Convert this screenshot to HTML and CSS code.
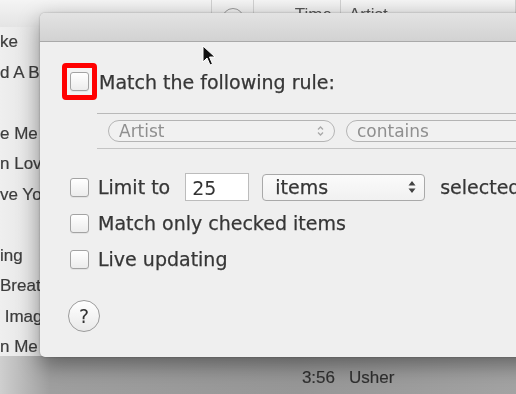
FILE: index.html
```html
<!DOCTYPE html>
<html lang="en">
<head>
    <meta charset="UTF-8">
    <meta name="viewport" content="width=device-width, initial-scale=1.0">
    <title>Smart Playlist</title>
    <link rel="stylesheet" href="styles.css">
</head>
<body>

<div class="screen">
    <!-- song list behind the sheet -->
    <div class="songs">
        <div class="song-head">
            <span class="col-name"></span>
            <span class="col-love"><span class="love-ring"></span></span>
            <span class="col-time">Time</span>
            <span class="col-artist">Artist</span>
        </div>
        <div class="song"><span class="col-name">ke</span></div>
        <div class="song"><span class="col-name">d A B</span></div>
        <div class="song"><span class="col-name"></span></div>
        <div class="song"><span class="col-name">e Me</span></div>
        <div class="song"><span class="col-name">n Lov</span></div>
        <div class="song"><span class="col-name">ve Yo</span></div>
        <div class="song"><span class="col-name"></span></div>
        <div class="song"><span class="col-name">ing</span></div>
        <div class="song"><span class="col-name">Breat</span></div>
        <div class="song"><span class="col-name">&nbsp;Imag</span></div>
        <div class="song"><span class="col-name">n Me</span></div>
    </div>
    <div class="song song-last">
        <span class="col-name"></span>
        <span class="col-love"></span>
        <span class="col-time">3:56</span>
        <span class="col-artist">Usher</span>
    </div>

    <!-- smart playlist sheet -->
    <div class="sheet">
        <div class="sheet-title"></div>
        <div class="sheet-body">
            <div class="rule-line">
                <span class="highlight"><span class="check"></span></span>
                <span class="label">Match the following rule:</span>
            </div>

            <div class="criteria">
                <span class="pill pill-field">
                    Artist
                    <svg class="updown" width="7" height="12" viewBox="0 0 7 12">
                        <path d="M1 4.5 L3.5 2 L6 4.5 M1 7.5 L3.5 10 L6 7.5" fill="none" stroke="#a8a8a8" stroke-width="1.3"/>
                    </svg>
                </span>
                <span class="pill pill-op">contains</span>
            </div>

            <div class="option">
                <span class="check"></span>
                <span class="label">Limit to</span>
                <span class="field">25</span>
                <span class="select">
                    items
                    <svg class="updown" width="8" height="14" viewBox="0 0 8 14">
                        <path d="M4 1 L7.5 5.5 L0.5 5.5 Z M4 13 L7.5 8.5 L0.5 8.5 Z" fill="#444"/>
                    </svg>
                </span>
                <span class="label">selected by</span>
            </div>
            <div class="option">
                <span class="check"></span>
                <span class="label">Match only checked items</span>
            </div>
            <div class="option">
                <span class="check"></span>
                <span class="label">Live updating</span>
            </div>

            <button class="help">?</button>
        </div>
    </div>

    <svg class="cursor" width="14" height="22" viewBox="0 0 14 22">
        <path d="M1 1 L1 17 L5 13 L8 20 L10.5 19 L7.5 12 L13 12 Z" fill="#111" stroke="#fff" stroke-width="1"/>
    </svg>
</div>

</body>
</html>
```

FILE: styles.css
```css
body {
    margin: 0;
    padding: 0;
    font-family: 'Liberation Sans', Arial, sans-serif;
    color: #3a3a3a;
    background: #e9e9e9;
}

.screen {
    position: relative;
    display: flex;
    flex-direction: column;
    width: 516px;
    height: 394px;
    overflow: hidden;
    background:
        linear-gradient(to right, #cfcfcf 0px, #9f9f9f 50px, #979797 300px, #a3a3a3 516px) 0 356px / 100% 38px no-repeat,
        linear-gradient(to right, #efefef 0px, #e4e4e4 40px);
    filter: blur(0.4px);
}

/* background list */
.songs {
    display: flex;
    flex-direction: column;
    flex-shrink: 0;
}

.song-head,
.song {
    display: grid;
    grid-template-columns: 212px 42px 87px 1fr;
    align-items: center;
    font-size: 17px;
}

.song-head {
    height: 27px;
    background: linear-gradient(#f4f4f4, #e4e4e4);
    color: #555;
}

.song-head > span {
    height: 100%;
    display: flex;
    align-items: center;
    border-right: 1px solid #d0d0d0;
    box-sizing: border-box;
}

.song {
    height: 30.5px;
    flex-shrink: 0;
    color: #3d3d3d;
    -webkit-text-stroke: 0.2px #3d3d3d;
}

.col-name {
    white-space: nowrap;
    overflow: hidden;
}

.col-time {
    justify-content: flex-end;
    text-align: right;
    padding-right: 6px;
}

.song-head .col-time {
    padding-right: 8px;
}

.col-artist {
    padding-left: 8px;
}

.love-ring {
    display: block;
    width: 20px;
    height: 20px;
    margin: 8px 0 0 10px;
    border: 1px solid #999;
    border-radius: 50%;
}

.song-last {
    flex: 1;
    height: auto;
    color: #2f2f2f;
}

/* the sheet */
.sheet {
    position: absolute;
    left: 40px;
    top: 13px;
    width: 520px;
    height: 344px;
    background: #efefef;
    border-radius: 5px 0 0 5px;
    box-shadow: 0 8px 22px rgba(0, 0, 0, 0.4), 0 0 2px rgba(0, 0, 0, 0.3);
    overflow: hidden;
    font-family: 'DejaVu Sans', Verdana, sans-serif;
}

.sheet-title {
    height: 28px;
    background: linear-gradient(#e3e3e3, #d2d2d2);
    border-bottom: 1px solid #a9a9a9;
}

.sheet-body {
    padding: 21px 0 0 30px;
}

.rule-line {
    display: flex;
    align-items: center;
    height: 37px;
    margin-left: -8px;
}

.highlight {
    display: flex;
    align-items: center;
    justify-content: center;
    width: 35px;
    height: 37px;
    box-sizing: border-box;
    border: 5px solid #ff0000;
    border-radius: 4px;
    background: #f2f2f2;
    margin-right: 2px;
}

.label {
    font-size: 19px;
    color: #363636;
    -webkit-text-stroke: 0.25px #363636;
    white-space: nowrap;
}

.check {
    display: inline-block;
    flex-shrink: 0;
    width: 19px;
    height: 19px;
    box-sizing: border-box;
    border: 1px solid #a3a3a3;
    border-radius: 3px;
    background: linear-gradient(#ffffff, #ececec);
    box-shadow: 0 1px 0 rgba(0, 0, 0, 0.05);
}

.criteria {
    display: flex;
    align-items: center;
    gap: 11px;
    margin: 13px 0 0 27px;
    height: 34px;
    padding-left: 11px;
    border-top: 1px solid #b9b9b9;
    border-bottom: 1px solid #c4c4c4;
}

.pill {
    display: flex;
    align-items: center;
    height: 22px;
    box-sizing: border-box;
    border: 1px solid #b4b4b4;
    border-radius: 11px;
    padding: 0 10px;
    font-size: 17px;
    color: #8f8f8f;
    background: #f1f1f1;
}

.pill-field {
    width: 227px;
    justify-content: space-between;
}

.pill-op {
    flex: 1;
}

.option {
    display: flex;
    align-items: center;
    gap: 9px;
    height: 36px;
}

.criteria + .option {
    margin-top: 20px;
}

.field {
    width: 64px;
    height: 28px;
    box-sizing: border-box;
    margin-left: 6px;
    padding: 3px 0 0 6px;
    border: 1px solid #bcbcbc;
    background: #fff;
    font-size: 19px;
    color: #333;
}

.select {
    display: flex;
    align-items: center;
    justify-content: space-between;
    width: 163px;
    height: 27px;
    box-sizing: border-box;
    margin: 0 6px 0 4px;
    padding: 0 8px 0 12px;
    border: 1px solid #a9a9a9;
    border-radius: 4px;
    background: linear-gradient(#fbfbfb, #f1f1f1);
    font-size: 19px;
    color: #363636;
    -webkit-text-stroke: 0.25px #363636;
}

.help {
    display: block;
    width: 32px;
    height: 32px;
    margin: 23px 0 0 -2px;
    padding: 0;
    border: 1px solid #9c9c9c;
    border-radius: 50%;
    background: linear-gradient(#ffffff, #e9e9e9);
    font-family: 'DejaVu Sans', sans-serif;
    font-size: 19px;
    color: #333;
}

.cursor {
    position: absolute;
    left: 202px;
    top: 45px;
}
```
